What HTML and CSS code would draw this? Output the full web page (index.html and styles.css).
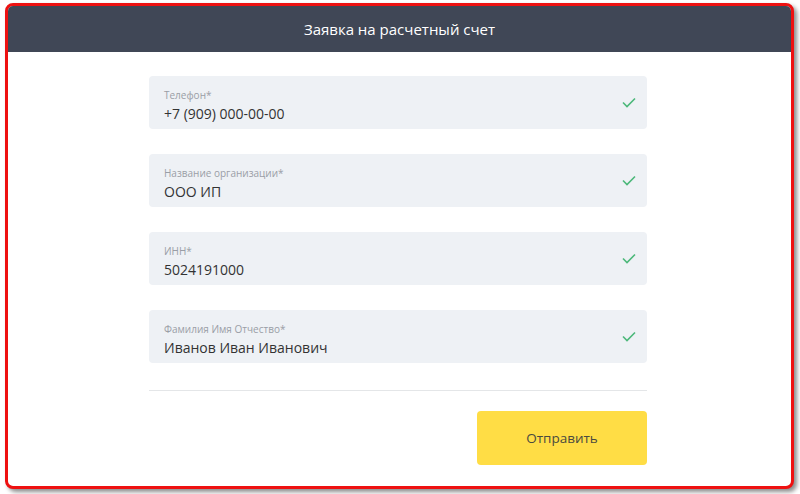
FILE: index.html
```html
<html>
    <head>
        <title>Заявка на расчетный счет</title>
        <link rel="stylesheet" href="styles.css">
    </head>
    <body>
        <div class="window">
            <div class="header">Заявка на расчетный счет</div>

            <div class="form">
                <div class="field">
                    <div class="label">Телефон*</div>
                    <div class="value">+7 (909) 000-00-00</div>
                    <svg class="check" width="14" height="11" viewBox="0 0 14 11"><polyline points="1,5.5 5,9.5 13,1.5" fill="none" stroke="#4cb87a" stroke-width="1.6"/></svg>
                </div>
                <div class="field">
                    <div class="label">Название организации*</div>
                    <div class="value">ООО ИП</div>
                    <svg class="check" width="14" height="11" viewBox="0 0 14 11"><polyline points="1,5.5 5,9.5 13,1.5" fill="none" stroke="#4cb87a" stroke-width="1.6"/></svg>
                </div>
                <div class="field">
                    <div class="label">ИНН*</div>
                    <div class="value">5024191000</div>
                    <svg class="check" width="14" height="11" viewBox="0 0 14 11"><polyline points="1,5.5 5,9.5 13,1.5" fill="none" stroke="#4cb87a" stroke-width="1.6"/></svg>
                </div>
                <div class="field">
                    <div class="label">Фамилия Имя Отчество*</div>
                    <div class="value">Иванов Иван Иванович</div>
                    <svg class="check" width="14" height="11" viewBox="0 0 14 11"><polyline points="1,5.5 5,9.5 13,1.5" fill="none" stroke="#4cb87a" stroke-width="1.6"/></svg>
                </div>

                <div class="divider"></div>

                <div class="actions">
                    <div class="button">Отправить</div>
                </div>
            </div>
        </div>
    </body>
</html>
```

FILE: styles.css
```css
body {
    margin: 0;
    background-color: white;
    font-family: "Open Sans", "Noto Sans", sans-serif;
}

.window {
    margin: 3px 0 0 5px;
    width: 783px;
    height: 480px;
    border: 3px solid #ee1111;
    border-radius: 8px;
    box-shadow: 3px 3px 4px rgba(0,0,0,0.45);
    overflow: hidden;
    background-color: white;
}

.header {
    height: 46px;
    background-color: #404756;
    color: white;
    font-size: 15px;
    line-height: 46px;
    text-align: center;
}

.form {
    width: 498px;
    margin: 24px 0 0 141px;
    display: flex;
    flex-direction: column;
    gap: 25px;
}

.field {
    position: relative;
    height: 53px;
    box-sizing: border-box;
    padding: 12px 15px 4px 15px;
    background-color: #eef1f5;
    border-radius: 4px;
}

.label {
    font-size: 10px;
    line-height: 14px;
    color: #9a9ea6;
}

.value {
    margin-top: 2px;
    font-size: 14px;
    line-height: 20px;
    color: #333;
}

.check {
    position: absolute;
    right: 11px;
    top: 21px;
}

.divider {
    height: 1px;
    background-color: #e4e6e8;
    margin-top: 2px;
}

.actions {
    display: flex;
    justify-content: flex-end;
    margin-top: -5px;
}

.button {
    width: 170px;
    height: 54px;
    line-height: 55px;
    text-align: center;
    background-color: #ffdd45;
    border-radius: 4px;
    font-size: 13.5px;
    color: #4a4a40;
}
```
